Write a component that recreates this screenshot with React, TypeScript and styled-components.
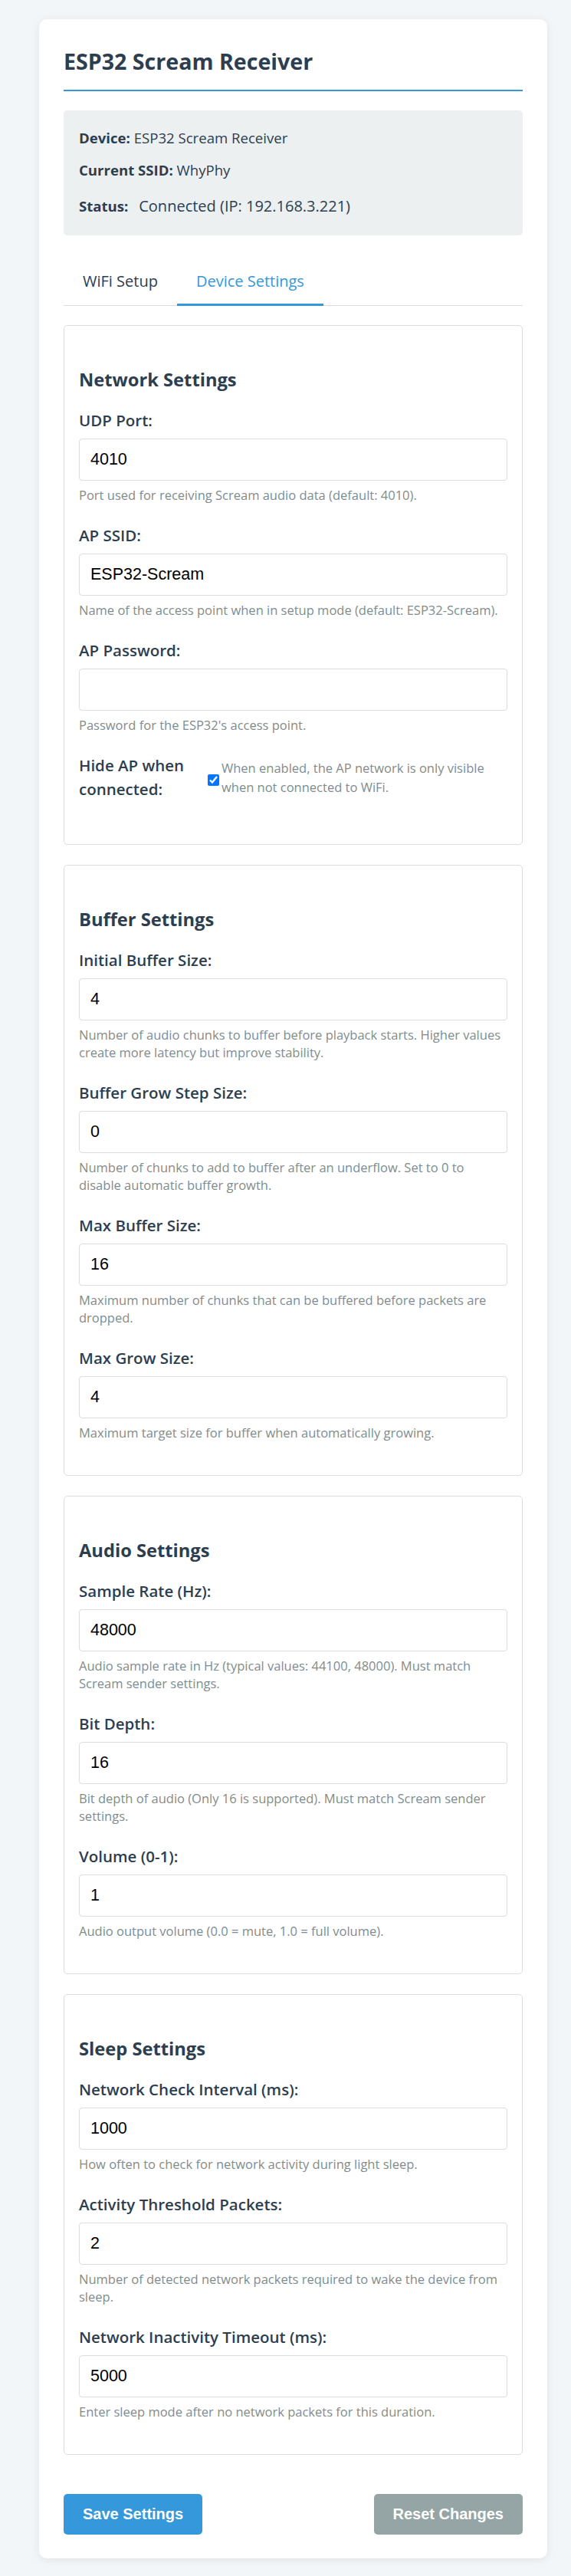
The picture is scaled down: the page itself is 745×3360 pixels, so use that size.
import React, { useState } from 'react';
import styled, { createGlobalStyle } from 'styled-components';

const GlobalStyle = createGlobalStyle`
  body {
    margin: 0;
    background: #f3f6f9;
    font-family: 'Open Sans', 'Noto Sans', sans-serif;
    color: #2c3e50;
    line-height: 1.6;
  }
  * {
    box-sizing: border-box;
  }
`;

const Page = styled.div`
  padding: 25px 31px 24px 51px;
`;

const Container = styled.div`
  background: white;
  border-radius: 10px;
  box-shadow: 0 2px 12px rgba(0, 0, 0, 0.08);
  padding: 32px 32px 31px;
`;

const Title = styled.h1`
  margin: 0;
  font-size: 28.6px;
  line-height: 1.6;
  font-weight: 700;
  color: #2c3e50;
  padding-bottom: 14px;
  border-bottom: 2px solid #3498db;
`;

const InfoBox = styled.div`
  background: #ecf0f1;
  border-radius: 5px;
  padding: 7px 20px 5px;
  margin: 25px 0 31px;
  font-size: 18.6px;
  line-height: 27px;

  p {
    margin: 15px 0;
  }
`;

const Status = styled.span`
  display: inline-block;
  padding: 5px 9px;
  font-size: 20px;
  font-weight: 500;
`;

const Tabs = styled.div`
  display: flex;
  border-bottom: 1px solid #ddd;
  margin-bottom: 25px;
`;

const Tab = styled.button<{ $active?: boolean }>`
  background: none;
  border: none;
  border-bottom: 3px solid ${(p) => (p.$active ? '#3498db' : 'transparent')};
  margin-bottom: -1px;
  padding: 13px 25px;
  font-family: inherit;
  font-size: 20px;
  line-height: 32px;
  color: ${(p) => (p.$active ? '#3498db' : '#2c3e50')};
  cursor: pointer;
`;

const Card = styled.div`
  border: 1px solid #ddd;
  border-radius: 5px;
  padding: 0 19px 18px;
  margin-bottom: 26px;
`;

const CardTitle = styled.h3`
  margin: 0 0 19px;
  padding-top: 51px;
  font-size: 23.7px;
  line-height: 38px;
  font-weight: 700;
  color: #2c3e50;
`;

const Group = styled.div`
  margin-bottom: 26px;
`;

const Label = styled.label`
  display: block;
  font-size: 20.5px;
  line-height: 31px;
  font-weight: 600;
  margin-bottom: 8px;
`;

const Input = styled.input`
  display: block;
  width: 100%;
  height: 55px;
  padding: 0 14px;
  border: 1px solid #ddd;
  border-radius: 4px;
  font-family: 'Liberation Sans', Arial, sans-serif;
  font-size: 21.5px;
  color: #000;
  background: white;
`;

const Help = styled.div`
  margin-top: 7px;
  font-size: 16.5px;
  line-height: 23px;
  color: #7f8c8d;
`;

const CheckRow = styled.div`
  display: flex;
  align-items: center;
  margin: 26px 0 38px;

  label {
    width: 165px;
    flex: none;
    margin-bottom: 0;
  }

  input {
    flex: none;
    width: 15px;
    height: 15px;
    margin: 8px 3px 0 3px;
  }

  div {
    margin-top: 0;
    line-height: 25px;
  }
`;

const Actions = styled.div`
  display: flex;
  justify-content: space-between;
  margin-top: 51px;
`;

const Button = styled.button<{ $secondary?: boolean }>`
  height: 53px;
  padding: 0 25px;
  border: none;
  border-radius: 5px;
  background: ${(p) => (p.$secondary ? '#95a5a6' : '#3498db')};
  color: white;
  font-family: 'Liberation Sans', Arial, sans-serif;
  font-size: 20px;
  font-weight: 700;
  cursor: pointer;
`;

interface Field {
  label: string;
  value: string;
  help: string;
  type?: string;
}

const sections: { title: string; fields: Field[] }[] = [
  {
    title: 'Buffer Settings',
    fields: [
      {
        label: 'Initial Buffer Size:',
        value: '4',
        help: 'Number of audio chunks to buffer before playback starts. Higher values create more latency but improve stability.',
      },
      {
        label: 'Buffer Grow Step Size:',
        value: '0',
        help: 'Number of chunks to add to buffer after an underflow. Set to 0 to disable automatic buffer growth.',
      },
      {
        label: 'Max Buffer Size:',
        value: '16',
        help: 'Maximum number of chunks that can be buffered before packets are dropped.',
      },
      {
        label: 'Max Grow Size:',
        value: '4',
        help: 'Maximum target size for buffer when automatically growing.',
      },
    ],
  },
  {
    title: 'Audio Settings',
    fields: [
      {
        label: 'Sample Rate (Hz):',
        value: '48000',
        help: 'Audio sample rate in Hz (typical values: 44100, 48000). Must match Scream sender settings.',
      },
      {
        label: 'Bit Depth:',
        value: '16',
        help: 'Bit depth of audio (Only 16 is supported). Must match Scream sender settings.',
      },
      {
        label: 'Volume (0-1):',
        value: '1',
        help: 'Audio output volume (0.0 = mute, 1.0 = full volume).',
      },
    ],
  },
  {
    title: 'Sleep Settings',
    fields: [
      {
        label: 'Network Check Interval (ms):',
        value: '1000',
        help: 'How often to check for network activity during light sleep.',
      },
      {
        label: 'Activity Threshold Packets:',
        value: '2',
        help: 'Number of detected network packets required to wake the device from sleep.',
      },
      {
        label: 'Network Inactivity Timeout (ms):',
        value: '5000',
        help: 'Enter sleep mode after no network packets for this duration.',
      },
    ],
  },
];

const FormField: React.FC<{ field: Field }> = ({ field }) => (
  <Group>
    <Label>{field.label}</Label>
    <Input type={field.type || 'text'} defaultValue={field.value} />
    <Help>{field.help}</Help>
  </Group>
);

export default function App() {
  const [tab, setTab] = useState('device');

  return (
    <Page>
      <GlobalStyle />
      <Container>
        <Title>ESP32 Scream Receiver</Title>
        <InfoBox>
          <p>
            <strong>Device:</strong> ESP32 Scream Receiver
          </p>
          <p>
            <strong>Current SSID:</strong> WhyPhy
          </p>
          <p>
            <strong>Status:</strong> <Status>Connected (IP: 192.168.3.221)</Status>
          </p>
        </InfoBox>

        <Tabs>
          <Tab $active={tab === 'wifi'} onClick={() => setTab('wifi')}>
            WiFi Setup
          </Tab>
          <Tab $active={tab === 'device'} onClick={() => setTab('device')}>
            Device Settings
          </Tab>
        </Tabs>

        <Card>
          <CardTitle>Network Settings</CardTitle>
          <FormField
            field={{
              label: 'UDP Port:',
              value: '4010',
              help: 'Port used for receiving Scream audio data (default: 4010).',
            }}
          />
          <FormField
            field={{
              label: 'AP SSID:',
              value: 'ESP32-Scream',
              help: 'Name of the access point when in setup mode (default: ESP32-Scream).',
            }}
          />
          <FormField
            field={{
              label: 'AP Password:',
              value: '',
              type: 'password',
              help: "Password for the ESP32's access point.",
            }}
          />
          <CheckRow>
            <Label>Hide AP when connected:</Label>
            <input type="checkbox" defaultChecked />
            <Help>When enabled, the AP network is only visible when not connected to WiFi.</Help>
          </CheckRow>
        </Card>

        {sections.map((s) => (
          <Card key={s.title}>
            <CardTitle>{s.title}</CardTitle>
            {s.fields.map((f) => (
              <FormField key={f.label} field={f} />
            ))}
          </Card>
        ))}

        <Actions>
          <Button>Save Settings</Button>
          <Button $secondary>Reset Changes</Button>
        </Actions>
      </Container>
    </Page>
  );
}
